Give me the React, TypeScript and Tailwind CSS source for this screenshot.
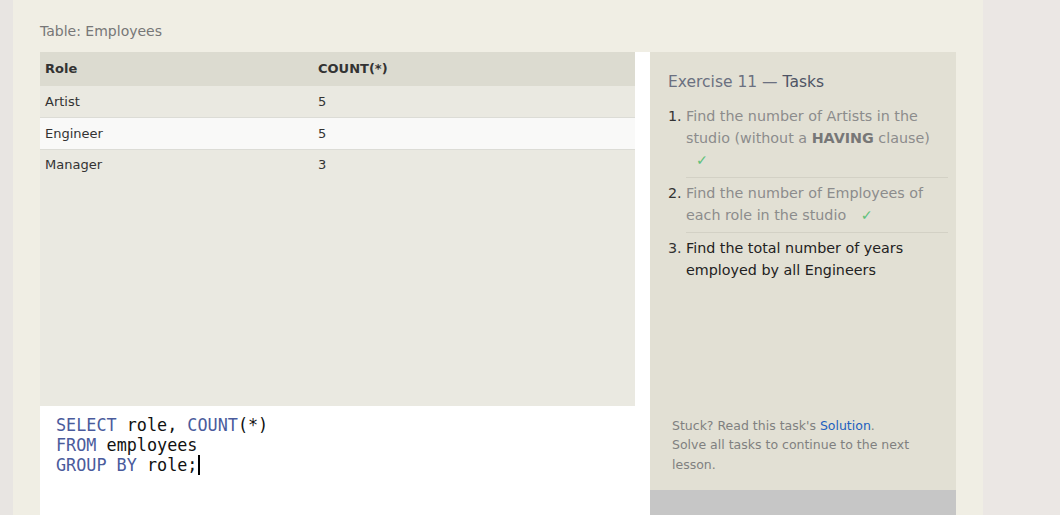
import React from 'react';

const rows = [
  { role: 'Artist', count: 5, light: false },
  { role: 'Engineer', count: 5, light: true },
  { role: 'Manager', count: 3, light: false },
];

const Check = () => <span className="ml-[10px] text-[#5fc17a]">✓</span>;

export default function App() {
  return (
    <div className="flex h-[515px] w-[1060px] overflow-hidden bg-[#ebe7e4] font-['DejaVu_Sans',sans-serif]">
      <div className="w-[13px] bg-[#e8e5e2]"></div>

      {/* Main lesson area */}
      <div className="flex w-[970px] flex-col bg-[#f0eee4] pl-[27px]">
        <div className="h-[52px] pt-[21px] text-[14px] leading-[20px] text-[#777]">Table: Employees</div>

        <div className="flex flex-1">
          {/* Results + editor */}
          <div className="flex w-[610px] flex-col">
            <div className="flex h-[354px]">
              <div className="flex-1 bg-[#eae9e1] text-[13px] text-[#333]">
                <div className="grid h-[34px] grid-cols-[273px_1fr] items-center bg-[#dcdbd0] pl-[5px] font-bold">
                  <span>Role</span>
                  <span>COUNT(*)</span>
                </div>
                {rows.map((r, i) => (
                  <div
                    key={r.role}
                    className={`grid grid-cols-[273px_1fr] items-center pl-[5px] ${i < 2 ? 'h-[32px] border-b border-[#dcdcd6]' : 'h-[30px]'} ${r.light ? 'bg-[#f9f9f8]' : 'bg-[#eae9e1]'}`}
                  >
                    <span>{r.role}</span>
                    <span>{r.count}</span>
                  </div>
                ))}
              </div>
              <div className="w-[15px] bg-white"></div>
            </div>

            <div className="flex-1 bg-white pl-[16px] pt-[9px] font-['DejaVu_Sans_Mono',monospace] text-[16.8px] leading-[20px] text-[#111]">
              <div><span className="text-[#4a5b9c]">SELECT</span> role, <span className="text-[#4a5b9c]">COUNT</span>(*)</div>
              <div><span className="text-[#4a5b9c]">FROM</span> employees</div>
              <div>
                <span className="text-[#4a5b9c]">GROUP BY</span> role;<span className="ml-[1px] inline-block h-[20px] w-[2px] align-top bg-black"></span>
              </div>
            </div>
          </div>

          {/* Tasks panel */}
          <div className="flex w-[306px] flex-col">
            <div className="flex h-[438px] flex-col justify-between bg-[#e2e0d4] pl-[18px] pr-[8px]">
              <div>
                <div className="pt-[19px] text-[15.5px] leading-[22px] text-[#6b7080]">
                  Exercise 11 — <span className="text-[#4e5465]">Tasks</span>
                </div>
                <ol className="mt-[12px] text-[14.3px] leading-[22px]">
                  <li className="flex">
                    <span className="w-[18px] shrink-0 text-[#333]">1.</span>
                    <div className="flex-1 border-b border-[#d3d1c5] pb-[6px] text-[#8c8c8c]">
                      Find the number of Artists in the studio (without a <b className="text-[#777]">HAVING</b> clause)
                      <div><Check /></div>
                    </div>
                  </li>
                  <li className="mt-[4px] flex">
                    <span className="w-[18px] shrink-0 text-[#333]">2.</span>
                    <div className="flex-1 border-b border-[#d3d1c5] pb-[6px] text-[#8c8c8c]">
                      Find the number of Employees of each role in the studio <Check />
                    </div>
                  </li>
                  <li className="mt-[4px] flex">
                    <span className="w-[18px] shrink-0 text-[#333]">3.</span>
                    <div className="flex-1 text-[#222]">Find the total number of years employed by all Engineers</div>
                  </li>
                </ol>
              </div>
              <div className="pb-[16px] pl-[4px] text-[12.5px] leading-[19.5px] text-[#808080]">
                Stuck? Read this task's <a className="text-[#1d5fbf]">Solution</a>.
                <br />
                Solve all tasks to continue to the next lesson.
              </div>
            </div>
            <div className="flex-1 bg-[#c6c6c6]"></div>
          </div>
        </div>
      </div>

      <div className="flex-1"></div>
    </div>
  );
}
